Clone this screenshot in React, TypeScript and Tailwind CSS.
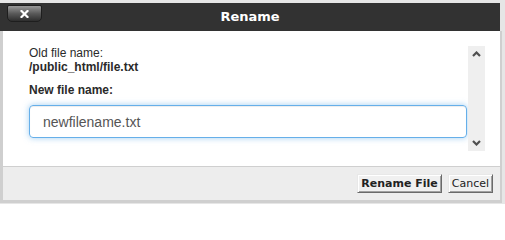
import React from 'react';

const CloseIcon = () => (
  <svg width="9" height="8" viewBox="0 0 9 8" className="block">
    <path d="M1.5 1 L7.5 7 M7.5 1 L1.5 7" stroke="#fff" strokeWidth="2.2" strokeLinecap="square" />
  </svg>
);

const Chevron = ({ up }: { up?: boolean }) => (
  <svg width="9" height="6" viewBox="0 0 9 6" className="block">
    <path
      d={up ? 'M1 5 L4.5 1.5 L8 5' : 'M1 1 L4.5 4.5 L8 1'}
      fill="none"
      stroke="#505050"
      strokeWidth="2.2"
    />
  </svg>
);

const App: React.FC = () => {
  return (
    <div className="w-[505px] h-[204px] bg-[#e6e6e6] pt-[3px] overflow-hidden">
      <div className="w-[502px]">
        {/* title bar */}
        <div className="relative w-[500px] h-[28px] bg-[#323232] flex items-center justify-center">
          <button className="absolute left-[7px] top-[2px] w-[35px] h-[17px] flex items-center justify-center rounded-t-[2px] rounded-b-[5px] border border-[#1e1e1e] bg-gradient-to-b from-[#9a9a9a] via-[#5a5a5a] to-[#2e2e2e]">
            <CloseIcon />
          </button>
          <span className="text-white font-bold text-[13px] font-['DejaVu_Sans',sans-serif]">
            Rename
          </span>
        </div>

        {/* body */}
        <div className="border-l-[3px] border-r-[2px] border-b-[3px] border-[#cfcfcf] bg-white">
          <div className="flex pt-[15px] pb-[15px] pl-[26px] pr-[15px] h-[135px]">
            <div className="flex-1 pr-px font-['Liberation_Sans',Arial,sans-serif] text-[12px] leading-[14px] text-[#2a2a2a]">
              <div>Old file name:</div>
              <div className="font-bold">/public_html/file.txt</div>
              <div className="font-bold mt-[9px]">New file name:</div>
              <input
                defaultValue="newfilename.txt"
                className="mt-[8px] w-full h-[33px] px-[13px] rounded-[4px] border border-[#66afe9] text-[14px] text-[#555] outline-none shadow-[inset_0_1px_1px_rgba(0,0,0,0.075),0_0_6px_rgba(102,175,233,0.6)]"
              />
            </div>
            <div className="w-[17px] h-[105px] bg-[#efefef] flex flex-col items-center justify-between py-[5px]">
              <Chevron up />
              <Chevron />
            </div>
          </div>

          {/* footer */}
          <div className="h-[34px] border-t border-[#cfcfcf] bg-[#ededed] flex items-center justify-end gap-[6px] pr-[7px] font-['DejaVu_Sans',sans-serif] text-[11px] text-[#222]">
            <button className="h-[19px] px-[3px] bg-[#f0f0f0] border border-t-[#e8e8e8] border-l-[#e8e8e8] border-r-[#6a6a6a] border-b-[#6a6a6a] shadow-[inset_1px_1px_0_#fff,inset_-1px_-1px_0_#a0a0a0] font-bold leading-none">
              Rename File
            </button>
            <button className="h-[19px] px-[3px] bg-[#f0f0f0] border border-t-[#e8e8e8] border-l-[#e8e8e8] border-r-[#6a6a6a] border-b-[#6a6a6a] shadow-[inset_1px_1px_0_#fff,inset_-1px_-1px_0_#a0a0a0] leading-none">
              Cancel
            </button>
          </div>
        </div>
      </div>
    </div>
  );
};

export default App;
